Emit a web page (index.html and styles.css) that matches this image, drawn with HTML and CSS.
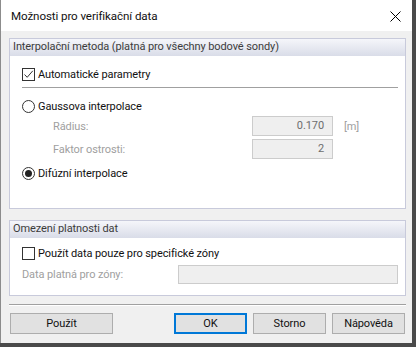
FILE: index.html
```html
<!DOCTYPE html>
<html lang="cs">
<head>
    <meta charset="UTF-8">
    <title>Možnosti pro verifikační data</title>
    <link rel="stylesheet" href="styles.css">
</head>
<body>

    <div class="window">
        <div class="titlebar">
            <span class="title">Možnosti pro verifikační data</span>
            <svg class="close" width="11" height="11" viewBox="0 0 11 11">
                <path d="M0.5 0.5 L10.5 10.5 M10.5 0.5 L0.5 10.5" stroke="#000" stroke-width="1" fill="none"/>
            </svg>
        </div>

        <div class="content">
            <div class="group group-method">
                <div class="group-head">Interpolační metoda (platná pro všechny bodové sondy)</div>
                <div class="group-body">
                    <div class="row row-auto">
                        <span class="check checked">
                            <svg width="11" height="11" viewBox="0 0 11 11"><path d="M1.5 5.5 L4.2 8.3 L9.8 1.8" stroke="#333" stroke-width="1" fill="none"/></svg>
                        </span>
                        <span>Automatické parametry</span>
                    </div>
                    <div class="divider"></div>
                    <div class="row row-gauss">
                        <span class="radio"></span>
                        <span>Gaussova interpolace</span>
                    </div>
                    <div class="param">
                        <span class="param-label">Rádius:</span>
                        <span class="field">0.170</span>
                        <span class="unit">[m]</span>
                    </div>
                    <div class="param">
                        <span class="param-label">Faktor ostrosti:</span>
                        <span class="field">2</span>
                    </div>
                    <div class="row row-diff">
                        <span class="radio selected"></span>
                        <span>Difúzní interpolace</span>
                    </div>
                </div>
            </div>

            <div class="group group-zones">
                <div class="group-head">Omezení platnosti dat</div>
                <div class="group-body">
                    <div class="row row-zone">
                        <span class="check"></span>
                        <span>Použít data pouze pro specifické zóny</span>
                    </div>
                    <div class="zone-line">
                        <span class="disabled">Data platná pro zóny:</span>
                        <span class="field field-wide"></span>
                    </div>
                </div>
            </div>

            <div class="footer-line"></div>

            <div class="buttons">
                <button class="btn btn-apply">Použít</button>
                <div class="btn-group">
                    <button class="btn btn-ok">OK</button>
                    <button class="btn">Storno</button>
                    <button class="btn">Nápověda</button>
                </div>
            </div>
        </div>
    </div>

</body>
</html>
```

FILE: styles.css
```css
* { margin: 0; padding: 0; box-sizing: border-box; }
body {
    background: #4a4a4a;
    font-family: Roboto, "Noto Sans", sans-serif;
    font-size: 11px; letter-spacing: -0.1px; color: #111;
    width: 416px; height: 347px; overflow: hidden;
}
.window {
    width: 412px; height: 343px;
    background: #f0f0f0;
    border-left: 1px solid #8c8c8c;
}
.titlebar {
    height: 31px; background: #fff;
    display: flex; align-items: center; justify-content: space-between;
    padding: 0 11px 0 10px;
}
.title { font-size: 11.6px; }
.close { margin-top: 1px; }

.content { padding: 7px 6px 0 8px; }

.group {
    border: 1px solid #c8cadb;
    background: #fff;
}
.group-head {
    height: 17px; line-height: 16px;
    padding-left: 3px; color: #3c3c3c;
    background: linear-gradient(#f5f6fa, #d9dce8);
}
.group-method { height: 171px; }
.group-zones { height: 76px; margin-top: 11px; }
.group-body { padding: 0 7px 0 12px; }

.row { display: flex; align-items: center; height: 18px; }
.row-auto { margin-top: 9px; }
.row-gauss { margin-top: 9px; }
.row-diff { margin-top: 5px; }
.row-zone { margin-top: 6px; }

.check {
    width: 13px; height: 13px; margin-right: 3px;
    border: 1px solid #333; background: #fff;
    display: flex; align-items: center; justify-content: center;
}
.radio {
    width: 13px; height: 13px; margin-right: 3px;
    border: 1px solid #333; border-radius: 50%;
    display: flex; align-items: center; justify-content: center;
}
.radio.selected::after {
    content: ''; width: 7px; height: 7px;
    border-radius: 50%; background: #222;
}

.divider { height: 1px; background: #a0a0a0; margin-top: 4px; }

.param {
    display: flex; align-items: center;
    height: 20px; padding-left: 31px;
    color: #a0a0a0;
}
.param + .param { margin-top: 3px; }
.row-gauss + .param { margin-top: 1px; }
.param-label { width: 199px; }
.field {
    width: 81px; height: 20px;
    border: 1px solid #cccccc; background: #efefef;
    color: #6d6d6d; text-align: right;
    padding-right: 8px; line-height: 18px;
}
.unit { margin-left: 11px; }

.zone-line {
    display: flex; align-items: center; justify-content: space-between;
    height: 19px; margin-top: 3px;
}
.disabled { color: #a0a0a0; }
.field-wide { width: 220px; height: 19px; }

.footer-line {
    height: 2px; margin-top: 8px;
    border-top: 1px solid #a0a0a0; border-bottom: 1px solid #fff;
}

.buttons {
    display: flex; justify-content: space-between;
    margin-top: 7px; padding: 0 1px 0 1px;
}
.btn-group { display: flex; gap: 6px; }
.btn {
    width: 73px; height: 21px;
    font-family: inherit; font-size: 11px; letter-spacing: -0.1px; color: #111;
    background: #e1e1e1; border: 1px solid #adadad;
}
.btn-apply { width: 103px; }
.btn-ok { border: 2px solid #0078d7; }
```
